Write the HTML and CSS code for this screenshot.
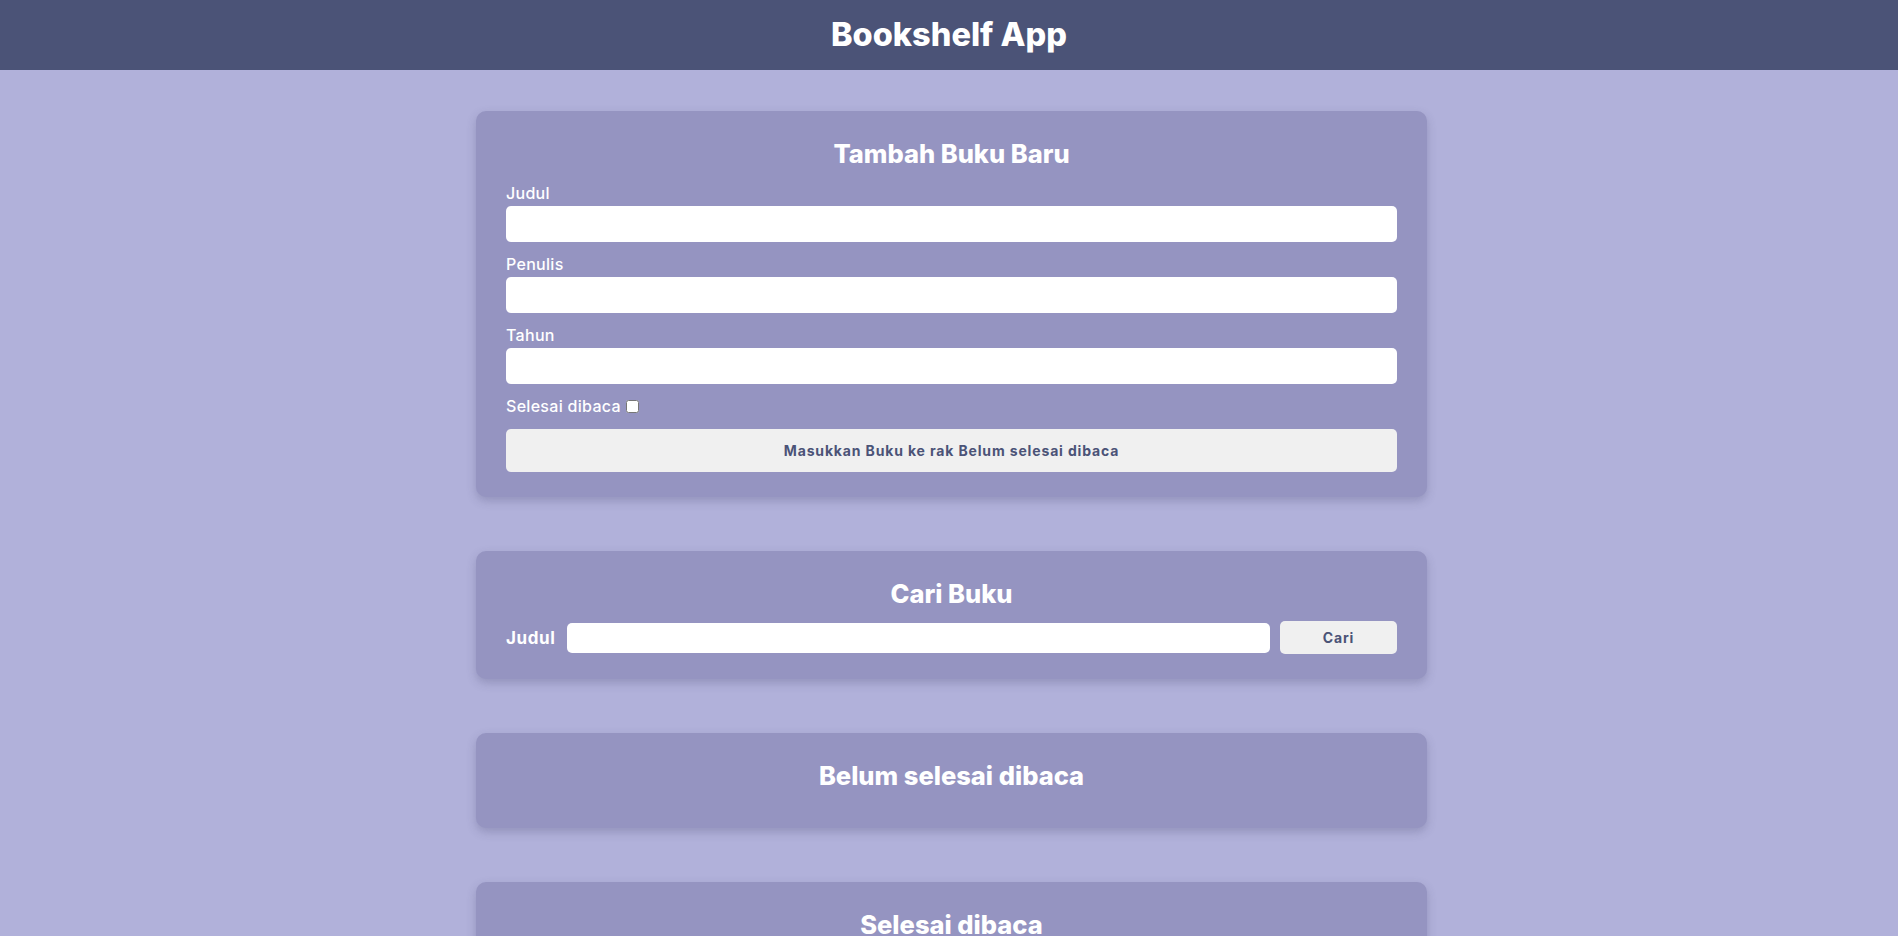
FILE: index.html
```html
<!DOCTYPE html>
<html lang="id">
<head>
<meta charset="utf-8">
<title>Bookshelf App</title>
<link rel="stylesheet" href="styles.css">
</head>
<body>
<header class="app-header">
  <h1 class="app-title">Bookshelf App</h1>
</header>
<main class="app-main">
  <section class="card">
    <h2 class="card-title">Tambah Buku Baru</h2>
    <form class="book-form">
      <div class="field">
        <label class="field-label" for="inputBookTitle">Judul</label>
        <input class="text-input" id="inputBookTitle" type="text">
      </div>
      <div class="field">
        <label class="field-label" for="inputBookAuthor">Penulis</label>
        <input class="text-input" id="inputBookAuthor" type="text">
      </div>
      <div class="field">
        <label class="field-label" for="inputBookYear">Tahun</label>
        <input class="text-input" id="inputBookYear" type="number">
      </div>
      <div class="check-row">
        <label class="field-label inline" for="inputBookIsComplete">Selesai dibaca</label>
        <input class="check" id="inputBookIsComplete" type="checkbox">
      </div>
      <button class="btn btn-wide" type="button">Masukkan Buku ke rak <span>Belum selesai dibaca</span></button>
    </form>
  </section>

  <section class="card">
    <h2 class="card-title">Cari Buku</h2>
    <form class="search-form">
      <label class="search-label" for="searchBookTitle">Judul</label>
      <input class="text-input search-input" id="searchBookTitle" type="text">
      <button class="btn btn-search" type="button">Cari</button>
    </form>
  </section>

  <section class="card">
    <h2 class="card-title">Belum selesai dibaca</h2>
    <div class="book-list"></div>
  </section>

  <section class="card">
    <h2 class="card-title">Selesai dibaca</h2>
    <div class="book-list"></div>
  </section>
</main>
</body>
</html>
```
FILE: styles.css
```css
* {
  box-sizing: border-box;
}

body {
  margin: 0;
  background: #b1b1da;
  font-family: "Inter", "Noto Sans", sans-serif;
  color: #ffffff;
}

.app-header {
  height: 70px;
  background: #4b5377;
  display: flex;
  align-items: center;
  justify-content: center;
}

.app-title {
  margin: 0;
  font-size: 32.5px;
  font-weight: 800;
  line-height: 40px;
  color: #ffffff;
}

.app-main {
  display: flex;
  flex-direction: column;
  align-items: center;
  gap: 54px;
  padding: 41px 0 40px 5px;
}

.card {
  width: 951px;
  background: #9594c1;
  border-radius: 10px;
  box-shadow: 0 4px 10px rgba(60, 60, 100, 0.25);
  padding: 26px 30px 25px;
}

.card-title {
  margin: 0 0 10px;
  font-size: 25.5px;
  line-height: 34px;
  font-weight: 800;
  text-align: center;
  color: #ffffff;
}

.book-form {
  display: flex;
  flex-direction: column;
}

.field {
  display: flex;
  flex-direction: column;
  margin: 0 0 10px;
}

.field-label {
  font-size: 16px;
  font-weight: 500;
  line-height: 25px;
  letter-spacing: 0.3px;
}

.text-input {
  height: 36px;
  border: none;
  border-radius: 5px;
  background: #ffffff;
  font-family: inherit;
  font-size: 15px;
  padding: 0 10px;
}

.check-row {
  display: flex;
  align-items: center;
  height: 24px;
  gap: 5px;
}

.check {
  width: 13px;
  height: 13px;
  margin: 0;
}

.btn {
  border: none;
  border-radius: 5px;
  background: #f0f0f0;
  color: #4b5377;
  font-family: inherit;
  font-weight: 700;
  font-size: 14px;
  letter-spacing: 0.85px;
}

.btn-wide {
  margin-top: 11px;
  height: 43px;
}

.search-form {
  display: flex;
  align-items: center;
}

.search-label {
  font-size: 17px;
  font-weight: 700;
  letter-spacing: 0.6px;
  margin-right: 12px;
}

.search-input {
  flex: 1;
  height: 30px;
  margin-right: 10px;
}

.btn-search {
  width: 117px;
  height: 33px;
}

.book-list {
  min-height: 0;
}
```
